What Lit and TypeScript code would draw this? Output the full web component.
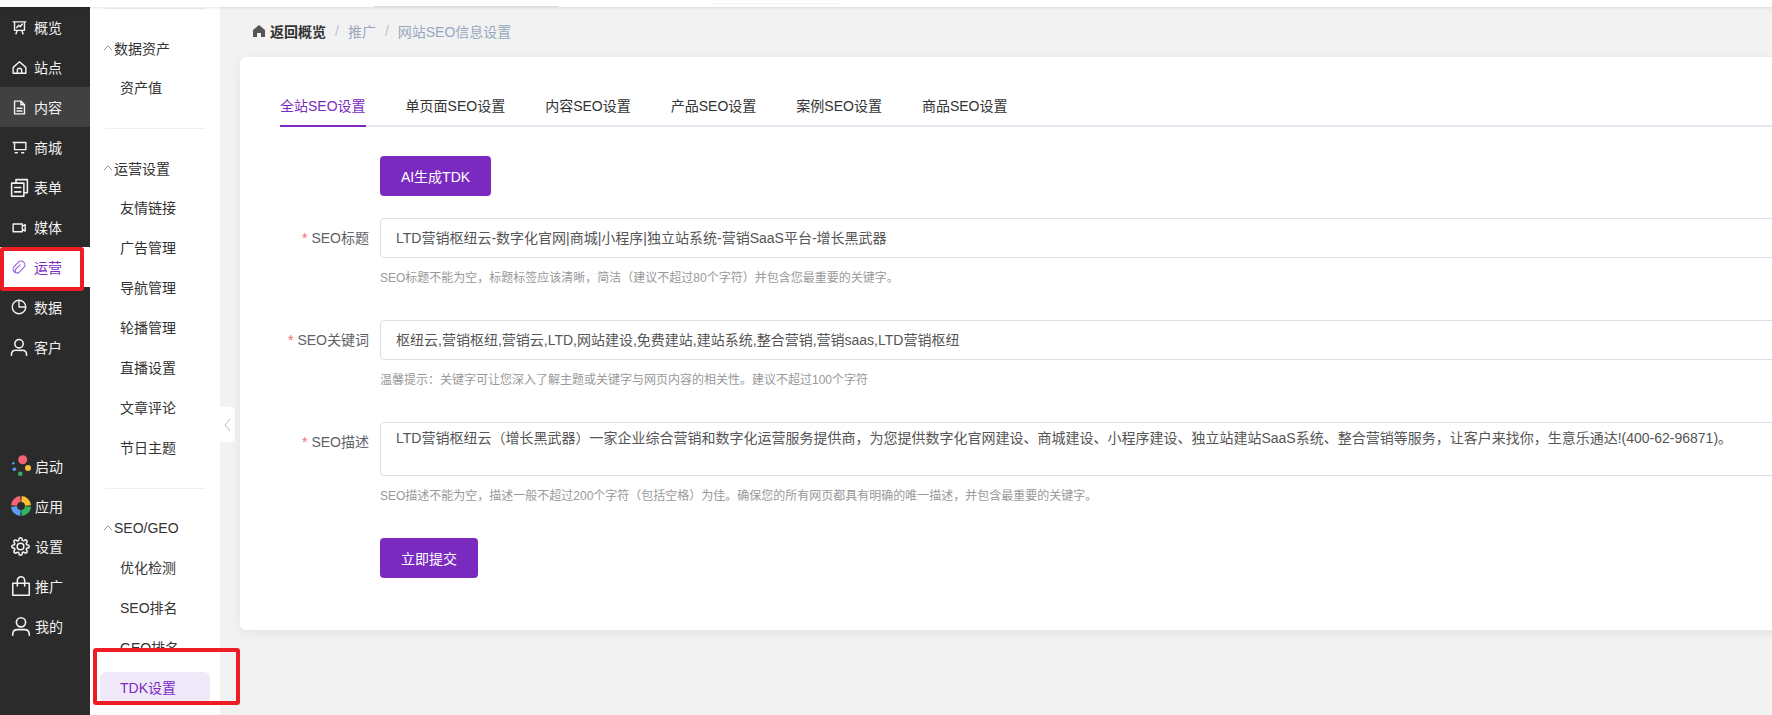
import { LitElement, html, css, svg } from "lit";
import { customElement } from "lit/decorators.js";

const ic = (body: unknown, size = 17, sw = 2) => html`<svg class="ic" width=${size} height=${size} viewBox="0 0 24 24" fill="none" stroke="currentColor" stroke-width=${sw} stroke-linecap="round" stroke-linejoin="round">${body}</svg>`;

const icons: Record<string, unknown> = {
  overview: svg`<path d="M3 4h18M5 4v12h14V4M8 12l3-3 2 2 3-4M9 16l-2 5M15 16l2 5"/>`,
  site: svg`<path d="M12 4l-8.500 7.500a1.500 1.500 0 0 0-.5 1V20h18v-7.500a1.500 1.500 0 0 0-.5-1zM9 20v-4a3 3 0 0 1 6 0v4"/>`,
  content: svg`<path d="M5 3h9l5 5v13H5zM14 3v5h5M8.500 13h7M8.500 17h7"/>`,
  shop: svg`<path d="M3 5h18v10H5M5 5v10M6 19.500h3M15 19.500h3"/>`,
  form: svg`<path d="M8 6V3h13v15h-4M3 7h14v15H3zM6.500 12h7M6.500 17h7"/>`,
  media: svg`<path d="M3 7h13v11H3zM16 10.500l4-2.500v9l-4-2.500"/>`,
  ops: svg`<g transform="rotate(45 12 12)"><path d="M7 16V8a5 5 0 0 1 10 0v9a3 3 0 0 1-6 0V9M7 16a5 5 0 0 0 10 0"/></g>`,
  data: svg`<path d="M12 3a9 9 0 1 0 9 9h-9z"/><path d="M12 3a9 9 0 0 1 9 9"/>`,
  user: svg`<circle cx="12" cy="8" r="5"/><path d="M3 22v-2a5 5 0 0 1 5-4h8a5 5 0 0 1 5 4v2"/>`,
  gear: svg`<circle cx="12" cy="12" r="4.200"/><path d="M19.400 15a1.650 1.650 0 0 0 .33 1.820l.06.06a2 2 0 0 1 0 2.830 2 2 0 0 1-2.830 0l-.06-.06a1.650 1.650 0 0 0-1.820-.33 1.650 1.650 0 0 0-1 1.510V21a2 2 0 0 1-2 2 2 2 0 0 1-2-2v-.09A1.650 1.650 0 0 0 9 19.400a1.650 1.650 0 0 0-1.820.33l-.06.06a2 2 0 0 1-2.830 0 2 2 0 0 1 0-2.830l.06-.06a1.650 1.650 0 0 0 .33-1.820 1.650 1.650 0 0 0-1.510-1H3a2 2 0 0 1-2-2 2 2 0 0 1 2-2h.09A1.650 1.650 0 0 0 4.600 9a1.650 1.650 0 0 0-.33-1.820l-.06-.06a2 2 0 0 1 0-2.830 2 2 0 0 1 2.830 0l.06.06a1.650 1.650 0 0 0 1.820.33H9a1.650 1.650 0 0 0 1-1.510V3a2 2 0 0 1 2-2 2 2 0 0 1 2 2v.09a1.650 1.650 0 0 0 1 1.510 1.650 1.650 0 0 0 1.820-.33l.06-.06a2 2 0 0 1 2.830 0 2 2 0 0 1 0 2.830l-.06.06a1.650 1.650 0 0 0-.33 1.820V9a1.650 1.650 0 0 0 1.510 1H21a2 2 0 0 1 2 2 2 2 0 0 1-2 2h-.09a1.650 1.650 0 0 0-1.510 1z"/>`,
  bag: svg`<path d="M3 9h18v13H3zM8 12V6a4 4 0 0 1 8 0v6"/>`,
};

const rainbowStart = html`<svg class="ic" width="21" height="22" viewBox="0 0 21 22"><circle cx="12.700" cy="4.700" r="4.500" fill="#f56476"/><circle cx="18" cy="13" r="3" fill="#fbc02d"/><circle cx="10.300" cy="18.700" r="2.300" fill="#34b560"/><circle cx="4.300" cy="14.300" r="1.800" fill="#5a9cf0"/><circle cx="3.300" cy="8.300" r="1.200" fill="#38b6e8"/></svg>`;
const rainbowApp = html`<svg class="ic" width="20" height="20" viewBox="0 0 20 20" fill="none" stroke-width="6"><path d="M3 9.500A7 7 0 0 1 9.500 3" stroke="#f56476"/><path d="M10.500 3A7 7 0 0 1 17 9.500" stroke="#fbc02d"/><path d="M17 10.500A7 7 0 0 1 10.500 17" stroke="#34b560"/><path d="M9.500 17A7 7 0 0 1 3 10.500" stroke="#5a9cf0"/></svg>`;

const railTop: [string, string, string, number, number][] = [
  ["overview", "概览", "", 17, 2], ["site", "站点", "", 17, 2], ["content", "内容", "hover", 17, 2], ["shop", "商城", "", 17, 2],
  ["form", "表单", "", 21, 1.8], ["media", "媒体", "", 17, 2], ["ops", "运营", "active", 18, 1.5], ["data", "数据", "", 18, 1.8], ["user", "客户", "", 20, 1.9],
];
const railBottom: [unknown, string][] = [
  [rainbowStart, "启动"], [rainbowApp, "应用"],
  [ic(icons.gear, 19, 2), "设置"], [ic(icons.bag, 22, 1.7), "推广"], [ic(icons.user, 22, 1.8), "我的"],
];

const groups = [
  { title: "数据资产", items: ["资产值"] },
  { title: "运营设置", items: ["友情链接", "广告管理", "导航管理", "轮播管理", "直播设置", "文章评论", "节日主题"] },
  { title: "SEO/GEO", items: ["优化检测", "SEO排名", "GEO排名", "TDK设置"] },
];

const tabs = ["全站SEO设置", "单页面SEO设置", "内容SEO设置", "产品SEO设置", "案例SEO设置", "商品SEO设置"];

@customElement("app-root")
export class AppRoot extends LitElement {
  static styles = css`
    :host {
      display: block; width: 1772px; height: 715px; overflow: hidden; position: relative;
      font-family: "Liberation Sans", "Noto Sans CJK SC", sans-serif; font-size: 14px; color: #333;
      background: #f2f2f2;
    }
    .top { height: 7px; background: #fff; box-shadow: 0 1px 3px rgba(0,0,0,.1); position: relative; z-index: 2; }
    .trace { position: absolute; height: 1px; }
    .trace.a { left: 374px; width: 185px; top: 6px; background: #dcdcdc; }
    .trace.b { left: 712px; width: 128px; top: 3px; background: #f1f1f1; }
    .body { display: flex; height: 708px; }
    .rail { width: 90px; flex: none; background: #2b2b2b; color: #fff; display: flex; flex-direction: column; }
    .rail-item { height: 40px; display: flex; align-items: center; gap: 6px; padding-left: 10px; box-sizing: border-box; color: #f2f2f2; }
    .rail-item .ic-wrap { width: 18px; height: 20px; display: flex; align-items: center; justify-content: center; flex: none; }
    .rail-item .ic { flex: none; }
    .rail-item.hover { background: #414141; }
    .rail-item.active { background: #fff; color: #7b2cbf; }
    .rail-item.active .ic { color: #9a5fe0; }
    .spacer { height: 79px; }
    .rail-low { gap: 4px; padding-left: 10px; }
    .rail-low .ic-wrap { width: 21px; height: 22px; }
    .sub { width: 130px; flex: none; background: #fff; display: flex; flex-direction: column; padding: 1px 10px 0; box-sizing: border-box; }
    .group { border-top: 1px solid #eeeef5; margin: 0 5px; padding: 20px 0; display: flex; flex-direction: column; flex: none; }
    .group-head { height: 39px; padding-bottom: 1px; box-sizing: border-box; display: flex; align-items: center; color: #333; margin-left: -2px; flex: none; }
    .group-head svg { flex: none; margin-right: 1px; color: #999; }
    .sub-item { height: 32px; line-height: 32px; margin: 4px -5px; padding-left: 20px; border-radius: 6px; color: #333; flex: none; }
    .sub-item.on { background: #efe9f9; color: #7b2cbf; }
    .gutter { width: 20px; flex: none; display: flex; }
    .handle { width: 15px; flex: none; align-self: flex-start; margin-top: 400px; height: 35px; background: #fff; border-radius: 0 4px 4px 0; display: flex; align-items: center; justify-content: center; color: #bbb; }
    .main { flex: 1; min-width: 0; display: flex; flex-direction: column; }
    .crumb { height: 50px; padding: 0 0 2px 12px; display: flex; align-items: center; gap: 6px; color: #97a8be; flex: none; box-sizing: border-box; }
    .crumb b { color: #333; font-weight: 700; }
    .crumb .sep { margin: 0 3px; color: #c0c4cc; }
    .crumb svg { color: #555; margin-right: -2px; }
    .card { width: 1640px; height: 573px; flex: none; background: #fff; border-radius: 6px; box-shadow: 0 3px 12px rgba(0,0,0,.06); padding: 0 40px; box-sizing: border-box; }
    .tabs { display: flex; gap: 40px; height: 70px; padding-top: 31px; box-sizing: border-box; border-bottom: 2px solid #e4e7ed; }
    .tab { height: 37px; line-height: 37px; color: #333; flex: none; }
    .tab.on { color: #7b2cbf; border-bottom: 2px solid #7b2abf; }
    .form { padding-left: 100px; }
    .btn { display: flex; align-items: center; justify-content: center; height: 40px; background: #7b2abf; color: #fff; border-radius: 4px; box-sizing: border-box; }
    .btn.ai { width: 111px; margin-top: 29px; }
    .btn.go { width: 98px; margin-top: 32px; }
    .field { margin-top: 22px; position: relative; }
    .field + .field { margin-top: 32px; }
    .label { position: absolute; right: 100%; top: 0; height: 40px; line-height: 40px; padding-right: 11px; white-space: nowrap; color: #606266; }
    .label i { color: #f56c6c; font-style: normal; margin-right: 4px; }
    .input { height: 40px; border: 1px solid #dcdfe6; border-radius: 4px; box-sizing: border-box; padding: 0 15px; line-height: 38px; color: #555; white-space: nowrap; background: #fff; }
    .input.area { height: 54px; line-height: 20px; padding-top: 5px; }
    .hint { margin-top: 10px; height: 20px; line-height: 20px; font-size: 12px; color: #999; white-space: nowrap; }
    .mark { position: absolute; border: 4px solid #ee1c25; border-radius: 3px; box-sizing: border-box; pointer-events: none; z-index: 5; }
    .mark.a { left: 0; top: 247px; width: 84px; height: 44px; }
    .mark.b { left: 93px; top: 648px; width: 147px; height: 57px; background: linear-gradient(#fff, #fff) 0 0 / 123px 20px no-repeat; }
  `;

  render() {
    return html`
      <div class="top"><span class="trace a"></span><span class="trace b"></span></div>
      <div class="body">
        <nav class="rail">
          ${railTop.map(([k, t, c, s, w]) => html`<div class="rail-item ${c}"><span class="ic-wrap">${ic(icons[k], s, w)}</span><span>${t}</span></div>`)}
          <div class="spacer"></div>
          ${railBottom.map(([i, t]) => html`<div class="rail-item rail-low"><span class="ic-wrap">${i}</span><span>${t}</span></div>`)}
        </nav>
        <aside class="sub">
          ${groups.map((g) => html`<section class="group">
            <div class="group-head"><svg width="10" height="10" viewBox="0 0 10 10" fill="none" stroke="currentColor"><path d="M1 7l4-4 4 4"/></svg>${g.title}</div>
            ${g.items.map((it) => html`<div class="sub-item ${it === "TDK设置" ? "on" : ""}">${it}</div>`)}
          </section>`)}
        </aside>
        <div class="gutter"><div class="handle"><svg width="9" height="16" viewBox="0 0 9 16" fill="none" stroke="currentColor"><path d="M7 2L2 8l5 6"/></svg></div></div>
        <main class="main">
          <div class="crumb">
            <svg width="14" height="14" viewBox="0 0 14 14" fill="currentColor"><path d="M7 1l6 5v7H9V9H5v4H1V6z"/></svg>
            <b>返回概览</b><span class="sep">/</span><span>推广</span><span class="sep">/</span><span>网站SEO信息设置</span>
          </div>
          <section class="card">
            <div class="tabs">${tabs.map((t, i) => html`<div class="tab ${i === 0 ? "on" : ""}">${t}</div>`)}</div>
            <div class="form">
              <div class="btn ai">AI生成TDK</div>
              <div class="field"><label class="label"><i>*</i>SEO标题</label><div class="input">LTD营销枢纽云-数字化官网|商城|小程序|独立站系统-营销SaaS平台-增长黑武器</div><div class="hint">SEO标题不能为空，标题标签应该清晰，简洁（建议不超过80个字符）并包含您最重要的关键字。</div></div>
              <div class="field"><label class="label"><i>*</i>SEO关键词</label><div class="input">枢纽云,营销枢纽,营销云,LTD,网站建设,免费建站,建站系统,整合营销,营销saas,LTD营销枢纽</div><div class="hint">温馨提示：关键字可让您深入了解主题或关键字与网页内容的相关性。建议不超过100个字符</div></div>
              <div class="field"><label class="label"><i>*</i>SEO描述</label><div class="input area">LTD营销枢纽云（增长黑武器）一家企业综合营销和数字化运营服务提供商，为您提供数字化官网建设、商城建设、小程序建设、独立站建站SaaS系统、整合营销等服务，让客户来找你，生意乐通达!(400-62-96871)。</div><div class="hint">SEO描述不能为空，描述一般不超过200个字符（包括空格）为佳。确保您的所有网页都具有明确的唯一描述，并包含最重要的关键字。</div></div>
              <div class="btn go">立即提交</div>
            </div>
          </section>
        </main>
      </div>
      <div class="mark a"></div>
      <div class="mark b"></div>
    `;
  }
}
